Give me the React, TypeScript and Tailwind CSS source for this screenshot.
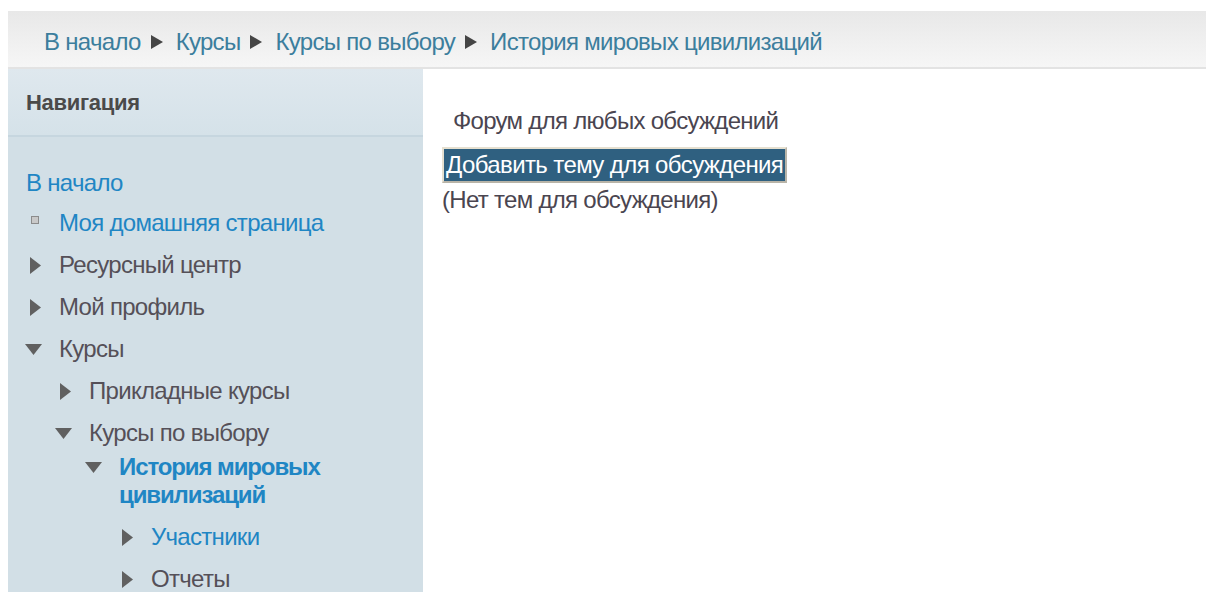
import React from "react";

const font = { fontFamily: '"Liberation Sans", Arial, sans-serif' };

function TriRight() {
  return (
    <svg width="11" height="17" viewBox="0 0 11 17" className="shrink-0">
      <polygon points="0,0 11,8.5 0,17" fill="#606060" />
    </svg>
  );
}

function TriDown() {
  return (
    <svg width="17" height="11" viewBox="0 0 17 11" className="shrink-0">
      <polygon points="0,0 17,0 8.5,11" fill="#606060" />
    </svg>
  );
}

function Crumb() {
  return (
    <svg width="12" height="14" viewBox="0 0 12 14" className="ml-[10px] mr-[13px] shrink-0">
      <polygon points="0,0 12,7 0,14" fill="#454545" />
    </svg>
  );
}

type Item = {
  label: string;
  depth: number;
  icon: "right" | "down" | "square";
  tone: "link" | "text" | "active";
};

const items: Item[] = [
  { label: "Моя домашняя страница", depth: 0, icon: "square", tone: "link" },
  { label: "Ресурсный центр", depth: 0, icon: "right", tone: "text" },
  { label: "Мой профиль", depth: 0, icon: "right", tone: "text" },
  { label: "Курсы", depth: 0, icon: "down", tone: "text" },
  { label: "Прикладные курсы", depth: 1, icon: "right", tone: "text" },
  { label: "Курсы по выбору", depth: 1, icon: "down", tone: "text" },
  { label: "История мировых цивилизаций", depth: 2, icon: "down", tone: "active" },
  { label: "Участники", depth: 3, icon: "right", tone: "link" },
  { label: "Отчеты", depth: 3, icon: "right", tone: "text" },
];

const depthPad = ["pl-[17px]", "pl-[47px]", "pl-[77px]", "pl-[109px]"];

function NavRow({ item, first }: { item: Item; first: boolean }) {
  const color =
    item.tone === "link"
      ? "text-[#1f86c4]"
      : item.tone === "active"
      ? "text-[#1f86c4] font-bold tracking-[-1.1px]"
      : "text-[#555058]";
  const gap = first ? "mt-[12px]" : item.tone === "active" ? "mt-[6px]" : "mt-[14px]";
  return (
    <li className={`flex items-start ${depthPad[item.depth]} ${gap}`}>
      <span className="w-[34px] h-[28px] flex items-center shrink-0">
        {item.icon === "right" && (
          <span className="pl-[5px] flex">
            <TriRight />
          </span>
        )}
        {item.icon === "down" && (
          <span className="flex">
            <TriDown />
          </span>
        )}
        {item.icon === "square" && (
          <span className="ml-[6px] w-[8px] h-[8px] bg-[#c9c9c9] border border-[#8c8c8c] -mt-[7px]" />
        )}
      </span>
      <span className={`leading-[28px] ${color} ${item.tone === "active" ? "w-[220px]" : ""}`}>
        {item.label}
      </span>
    </li>
  );
}

export default function App() {
  return (
    <div className="min-h-screen bg-white pt-[11px] text-[24px] tracking-[-0.7px]" style={font}>
      <div className="ml-[8px] h-[58px] bg-gradient-to-b from-[#e8e8e8] to-[#f6f6f6] border-b-2 border-[#e3e3e3] flex items-center pt-[5px] pl-[36px] text-[#3c7e9d]">
        <span>В начало</span>
        <Crumb />
        <span>Курсы</span>
        <Crumb />
        <span>Курсы по выбору</span>
        <Crumb />
        <span>История мировых цивилизаций</span>
      </div>
      <div className="flex ml-[8px]">
        <aside className="w-[415px] shrink-0 bg-[#d2dfe6] pb-[20px]">
          <div className="h-[68px] bg-gradient-to-b from-[#dfe8ee] to-[#d5e2e9] border-b-2 border-[#c6d6df] flex items-center pl-[18px] font-bold text-[#4a4a4a] text-[22px] tracking-[-0.3px]">
            Навигация
          </div>
          <div className="pt-[32px] pl-[18px] text-[#1f86c4] leading-[28px]">В начало</div>
          <ul>
            {items.map((it, i) => (
              <NavRow key={it.label} item={it} first={i === 0} />
            ))}
          </ul>
        </aside>
        <main className="flex-1 pl-[19px] pt-[38px] text-[#4a4550]">
          <div className="pl-[11px] leading-[28px]">Форум для любых обсуждений</div>
          <button className="mt-[12px] bg-[#2f6080] text-white border-2 border-[#e6e0d0] border-r-[#b8b4a8] border-b-[#b8b4a8] px-[2px] h-[36px] leading-[30px] tracking-[-0.6px]">
            Добавить тему для обсуждения
          </button>
          <div className="leading-[28px] mt-[3px]">(Нет тем для обсуждения)</div>
        </main>
      </div>
    </div>
  );
}
